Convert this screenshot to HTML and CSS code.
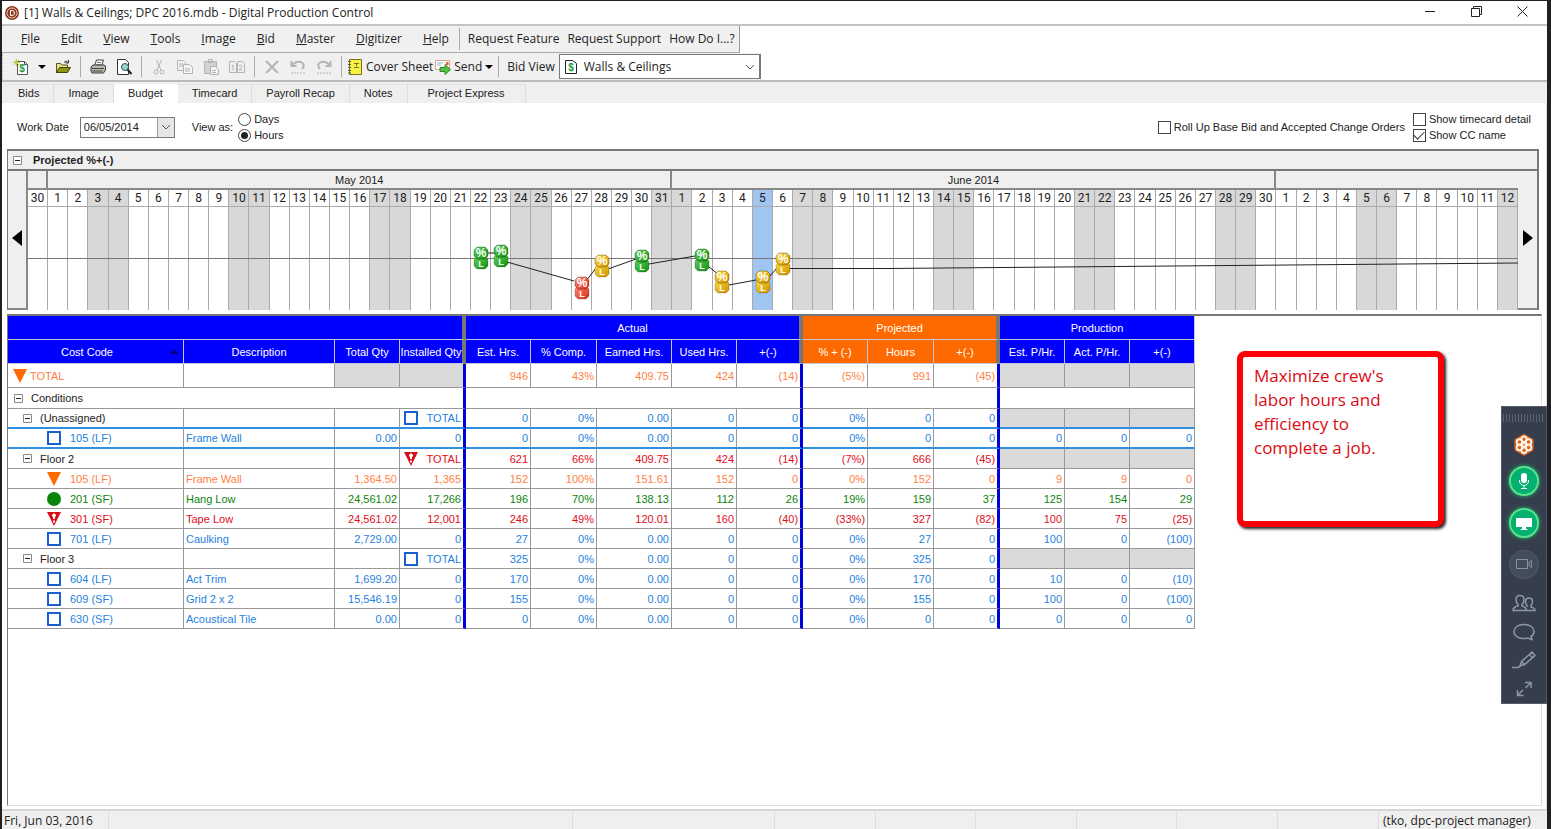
FILE: index.html
```html
<!DOCTYPE html>
<html lang="en">
<head>
<meta charset="utf-8">
<title>[1] Walls &amp; Ceilings; DPC 2016.mdb - Digital Production Control</title>
<link rel="stylesheet" href="styles.css">
</head>
<body>
<svg class="defs" aria-hidden="true">
  <defs>
    <linearGradient id="g-green" x1="0" x2="1" y1="0" y2="1"><stop offset="0" stop-color="#5fd35a"/><stop offset="1" stop-color="#0f8f12"/></linearGradient>
    <linearGradient id="g-yellow" x1="0" x2="1" y1="0" y2="1"><stop offset="0" stop-color="#ffdf3c"/><stop offset="1" stop-color="#cf8e00"/></linearGradient>
    <linearGradient id="g-red" x1="0" x2="1" y1="0" y2="1"><stop offset="0" stop-color="#ff8d78"/><stop offset="1" stop-color="#d92812"/></linearGradient>
    <symbol id="pill" viewBox="0 0 16 24">
      <path d="M4 10h8l3 3v7l-3 3H4l-3-3v-7z" stroke="#0003"/>
      <path d="M4 1h8l3 3v6l-3 3H4l-3-3V4z" stroke="#0004"/>
      <text x="8" y="11" class="pill-text percent">%</text>
      <text x="8" y="21" class="pill-text">L</text>
    </symbol>
    <symbol id="box" viewBox="0 0 14 14"><rect x="1" y="1" width="12" height="12" fill="#fff" stroke="#1660d0" stroke-width="2"/></symbol>
    <symbol id="down" viewBox="0 0 14 14"><path d="M0 0h14L7 14z" fill="#ff6a00"/></symbol>
    <symbol id="dot" viewBox="0 0 14 14"><circle cx="7" cy="7" r="7" fill="#0b840b"/></symbol>
    <symbol id="alert" viewBox="0 0 14 14"><path d="M0 0h14L7 14z" fill="#d80d18"/><path d="M7 1.500v5.500M5 3.500h4M7 8.500v2" stroke="#fff" stroke-width="2"/></symbol>
    <symbol id="minus" viewBox="0 0 9 9"><path d="M.5.5h8v8h-8z" fill="#fff" stroke="#8a8a8a"/><path d="M2 4.500h5" stroke="#222"/></symbol>
    <symbol id="chevron" viewBox="0 0 10 6"><path d="M1 1l4 4 4-4" fill="none" stroke="#555"/></symbol>
  </defs>
</svg>

<div class="window">
  <header class="titlebar">
    <svg class="app-icon" viewBox="0 0 14 14"><circle cx="7" cy="7" r="7" fill="#8a3a22"/><circle cx="7" cy="7" r="5" fill="none" stroke="#f0c8b4"/><path d="M5.500 4.500h1.500a2.500 2.500 0 0 1 0 5H5.500z" fill="none" stroke="#fff"/></svg>
    <h1>[1] Walls &amp; Ceilings; DPC 2016.mdb - Digital Production Control</h1>
    <div class="window-buttons">
      <button aria-label="Minimize"><svg viewBox="0 0 11 11"><path d="M0 5.500h10"/></svg></button>
      <button aria-label="Restore"><svg viewBox="0 0 11 11"><path d="M.5 2.500h8v8h-8zM2.500 2.500v-2h8v8h-2"/></svg></button>
      <button aria-label="Close"><svg viewBox="0 0 11 11"><path d="M.5.5l10 10M10.500.5l-10 10"/></svg></button>
    </div>
  </header>

  <nav class="menubar">
    <button><u>F</u>ile</button><button><u>E</u>dit</button><button><u>V</u>iew</button><button><u>T</u>ools</button><button><u>I</u>mage</button><button><u>B</u>id</button><button><u>M</u>aster</button><button><u>D</u>igitizer</button><button><u>H</u>elp</button>
    <div class="requests"><button>Request Feature</button><button>Request Support</button><button>How Do I...?</button></div>
  </nav>

  <div class="toolbar">
    <button class="tool" aria-label="New"><svg viewBox="0 0 16 16"><path d="M4.500 2.500h7l3 3v10h-10z" fill="#fff" stroke="#555"/><path d="M11.500 2.500v3h3" fill="none" stroke="#555"/><text x="9" y="13" class="dollar">$</text><path d="M3.500 0v7M0 3.500h7M1 1l5 5M6 1L1 6" stroke="#c3c744"/></svg></button>
    <button class="tool caret" aria-label="New options"><svg viewBox="0 0 8 4"><path d="M0 0h8L4 4z"/></svg></button>
    <button class="tool" aria-label="Open"><svg viewBox="0 0 16 16"><path d="M1.500 13.500v-9h4l1 1.500h6v3" fill="#e9e588" stroke="#55551a"/><path d="M1.500 13.500l3-5h11l-3 5z" fill="#8f9414" stroke="#3f430c"/><path d="M9 3.500q2-3 4 0M13.500 1v3h-3" fill="none" stroke="#333"/></svg></button>
    <i></i>
    <button class="tool" aria-label="Print"><svg viewBox="0 0 16 16"><path d="M4.500 7l2-6h7l-2 6z" fill="#fff" stroke="#444"/><path d="M7 3.500h4M6.500 5.500h4" stroke="#777"/><path d="M1 8l2-2h11l1.500 1v4l-2 3H2l-1-2z" fill="#b7b7b1" stroke="#3c3c3c"/><path d="M2 9.500h12M2.500 12h10" stroke="#444"/><path d="M9 10.500h2" stroke="#c7d631"/></svg></button>
    <button class="tool" aria-label="Print preview"><svg viewBox="0 0 16 16"><path d="M1.500.5h8l3 3v12h-11z" fill="#fff" stroke="#333"/><circle cx="9" cy="8" r="3.500" fill="#9fd0cf" stroke="#2c5657"/><path d="M11.500 10.500l4 4.500" stroke="#222" stroke-width="2"/></svg></button>
    <i></i>
    <button class="tool off" aria-label="Cut" disabled><svg viewBox="0 0 16 16"><path d="M5.500 1l4.500 10M10.500 1L6 11"/><circle cx="5" cy="13" r="2"/><circle cx="11" cy="13" r="2"/></svg></button>
    <button class="tool off" aria-label="Copy" disabled><svg viewBox="0 0 16 16"><path d="M.5 1.500h6l2 2v8h-8zM2 5h4M2 7h4"/><path d="M6.500 5.500h6l3 3v6h-9zM8 10h5M8 12h5" fill="#f4f4f4"/></svg></button>
    <button class="tool off" aria-label="Paste" disabled><svg viewBox="0 0 16 16"><path d="M1.500 2.500h12v12h-12z" fill="#d2d2d2"/><path d="M5.500.5h4v3h-4z"/><path d="M7.500 7.500h5l3 3v5h-8zM9 11.500h4M9 13.500h4" fill="#f4f4f4"/></svg></button>
    <button class="tool off" aria-label="Renumber" disabled><svg viewBox="0 0 16 16"><path d="M.5 2.500h5l2 2v9h-7zM8.500 2.500h5l2 2v9h-7zM2.500 7l1.500-1v5.500M10 7q2-2 3 0 0 1-3 4h3.500"/></svg></button>
    <i></i>
    <button class="tool off" aria-label="Delete" disabled><svg viewBox="0 0 16 16"><path d="M2 2l12 12M14 2L2 14" stroke-width="2"/></svg></button>
    <button class="tool off" aria-label="Undo" disabled><svg viewBox="0 0 16 16"><path d="M1.500 2v5h5M2 6.500q4-5 9-3.500 5 3 1 7" stroke-width="2"/><path d="M1 14h14" stroke-dasharray="2 1"/></svg></button>
    <button class="tool off" aria-label="Redo" disabled><svg viewBox="0 0 16 16"><path d="M14.500 2v5h-5M14 6.500q-4-5-9-3.500-5 3-1 7" stroke-width="2"/><path d="M1 14h14" stroke-dasharray="2 1"/></svg></button>
    <i></i>
    <button class="wide"><svg viewBox="0 0 16 16"><path d="M2.500.5h12v15h-12z" fill="#f9f142" stroke="#77731b"/><path d="M1 2.500h3M1 5.500h3M1 8.500h3M1 11.500h3M1 14h3" stroke="#555"/><path d="M7 4.500h5M9.500 4.500v3M7 8.500h5" stroke="#77731b"/></svg>Cover Sheet</button>
    <button class="wide"><svg viewBox="0 0 16 16"><path d="M.5 1.500h14v9H.5z" fill="#fff" stroke="#d9a98e"/><path d="M11 3h2.500v3H11z" fill="#e85a3a"/><path d="M2 4h6M2 6h4" stroke="#9ab7d9"/><path d="M5 8.500h5V5.500l5.500 5-5.500 5v-3H5z" fill="#55c044" stroke="#2f8a26"/></svg>Send<svg class="small" viewBox="0 0 8 4"><path d="M0 0h8L4 4z"/></svg></button>
    <i></i>
    <label for="bid-view">Bid View</label>
    <div class="combo view-combo">
      <svg class="doc" viewBox="0 0 14 16"><path d="M1.500 1.500h7l4 3v10h-11z" fill="#fff" stroke="#222"/><text x="7" y="12" class="dollar">$</text></svg>
      <select id="bid-view"><option>Walls &amp; Ceilings</option></select>
      <svg class="arrow"><use href="#chevron"/></svg>
    </div>
  </div>

  <div class="tabs" role="tablist">
    <button role="tab">Bids</button><button role="tab">Image</button><button role="tab" class="active" aria-selected="true">Budget</button><button role="tab">Timecard</button><button role="tab">Payroll Recap</button><button role="tab">Notes</button><button role="tab" class="roomy">Project Express</button>
  </div>

  <main>
    <form class="filters">
      <label for="work-date">Work Date</label>
      <div class="combo date-combo">
        <select id="work-date"><option>06/05/2014</option></select>
        <span class="arrow-box"><svg class="arrow"><use href="#chevron"/></svg></span>
      </div>
      <span>View as:</span>
      <div class="stack">
        <label><input type="radio" name="unit">Days</label>
        <label><input type="radio" name="unit" checked>Hours</label>
      </div>
      <label class="rollup"><input type="checkbox">Roll Up Base Bid and Accepted Change Orders</label>
      <div class="stack">
        <label><input type="checkbox">Show timecard detail</label>
        <label><input type="checkbox" checked>Show CC name</label>
      </div>
    </form>

    <section class="projection">
      <h2><svg><use href="#minus"/></svg>Projected %+(-)</h2>
      <div class="timeline">
        <button aria-label="Earlier"><svg viewBox="0 0 10 16"><path d="M10 0v16L0 8z"/></svg></button>
        <div class="calendar">
          <div class="months"><span></span><span>May 2014</span><span>June 2014</span><span></span></div>
          <div class="days">
            <span>30</span><span>1</span><span>2</span><span class="off">3</span><span class="off">4</span><span>5</span><span>6</span><span>7</span><span>8</span><span>9</span><span class="off">10</span><span class="off">11</span><span>12</span><span>13</span><span>14</span><span>15</span><span>16</span><span class="off">17</span><span class="off">18</span><span>19</span><span>20</span><span>21</span><span>22</span><span>23</span><span class="off">24</span><span class="off">25</span><span>26</span><span>27</span><span>28</span><span>29</span><span>30</span><span class="off">31</span>
            <span class="off">1</span><span>2</span><span>3</span><span>4</span><span class="today">5</span><span>6</span><span class="off">7</span><span class="off">8</span><span>9</span><span>10</span><span>11</span><span>12</span><span>13</span><span class="off">14</span><span class="off">15</span><span>16</span><span>17</span><span>18</span><span>19</span><span>20</span><span class="off">21</span><span class="off">22</span><span>23</span><span>24</span><span>25</span><span>26</span><span>27</span><span class="off">28</span><span class="off">29</span><span>30</span>
            <span>1</span><span>2</span><span>3</span><span>4</span><span class="off">5</span><span class="off">6</span><span>7</span><span>8</span><span>9</span><span>10</span><span>11</span><span class="off">12</span>
          </div>
          <div class="plot">
            <svg class="lines" viewBox="0 0 1490 104" preserveAspectRatio="none"><path d="M0 52.500H1490" stroke="#777"/><path d="M453 47H473M479 56L546 75M558 75L568 62M580 63L608 53M621 58L667 50M681 61L690 68M701 79L728 74M741 71L749 62M760 62.500H860L1490 57" stroke="#222"/></svg>
            <svg class="mark green" style="left:30.400%;top:50%"><use href="#pill"/></svg>
            <svg class="mark green" style="left:31.750%;top:48%"><use href="#pill"/></svg>
            <svg class="mark red" style="left:37.150%;top:79%"><use href="#pill"/></svg>
            <svg class="mark yellow" style="left:38.500%;top:58%"><use href="#pill"/></svg>
            <svg class="mark green" style="left:41.200%;top:53%"><use href="#pill"/></svg>
            <svg class="mark green" style="left:45.250%;top:52%"><use href="#pill"/></svg>
            <svg class="mark yellow" style="left:46.600%;top:73%"><use href="#pill"/></svg>
            <svg class="mark yellow" style="left:49.300%;top:73%"><use href="#pill"/></svg>
            <svg class="mark yellow" style="left:50.650%;top:56%"><use href="#pill"/></svg>
          </div>
        </div>
        <button aria-label="Later"><svg viewBox="0 0 10 16"><path d="M0 0v16l10-8z"/></svg></button>
      </div>
    </section>

    <section class="budget">
      <table>
        <colgroup><col class="w176"><col class="w151"><col class="w65"><col class="w66"><col class="w65"><col class="w66"><col class="w75"><col class="w65"><col class="w66"><col class="w65"><col class="w66"><col class="w66"><col class="w65"><col class="w65"><col class="w65"></colgroup>
        <thead>
          <tr><th colspan="4" class="edge"></th><th colspan="5" class="edge">Actual</th><th colspan="3" class="edge proj">Projected</th><th colspan="3">Production</th></tr>
          <tr><th><div class="sorted">Cost Code<svg viewBox="0 0 10 5"><path d="M0 5h10L5 0z"/></svg></div></th><th>Description</th><th>Total Qty</th><th class="edge">Installed Qty</th><th>Est. Hrs.</th><th>% Comp.</th><th>Earned Hrs.</th><th>Used Hrs.</th><th class="edge">+(-)</th><th class="proj">% + (-)</th><th class="proj">Hours</th><th class="edge proj">+(-)</th><th>Est. P/Hr.</th><th>Act. P/Hr.</th><th>+(-)</th></tr>
        </thead>
        <tbody>
          <tr class="orange grand"><td><div class="top"><svg><use href="#down"/></svg>TOTAL</div></td><td></td><td class="gray"></td><td class="gray edge"></td><td>946</td><td>43%</td><td>409.75</td><td>424</td><td class="edge">(14)</td><td>(5%)</td><td>991</td><td class="edge">(45)</td><td class="gray"></td><td class="gray"></td><td class="gray"></td></tr>
          <tr class="section"><td colspan="4" class="edge"><div class="root"><svg><use href="#minus"/></svg>Conditions</div></td><td colspan="5" class="edge"></td><td colspan="3" class="edge"></td><td colspan="3"></td></tr>
          <tr class="blue before"><td><div class="group"><svg><use href="#minus"/></svg>(Unassigned)</div></td><td></td><td></td><td class="edge"><div class="sum"><svg><use href="#box"/></svg>TOTAL</div></td><td>0</td><td>0%</td><td>0.00</td><td>0</td><td class="edge">0</td><td>0%</td><td>0</td><td class="edge">0</td><td class="gray"></td><td class="gray"></td><td class="gray"></td></tr>
          <tr class="blue selected"><td><div class="leaf"><svg><use href="#box"/></svg>105 (LF)</div></td><td>Frame Wall</td><td>0.00</td><td class="edge">0</td><td>0</td><td>0%</td><td>0.00</td><td>0</td><td class="edge">0</td><td>0%</td><td>0</td><td class="edge">0</td><td>0</td><td>0</td><td>0</td></tr>
          <tr class="red"><td><div class="group"><svg><use href="#minus"/></svg>Floor 2</div></td><td></td><td></td><td class="edge"><div class="sum"><svg><use href="#alert"/></svg>TOTAL</div></td><td>621</td><td>66%</td><td>409.75</td><td>424</td><td class="edge">(14)</td><td>(7%)</td><td>666</td><td class="edge">(45)</td><td class="gray"></td><td class="gray"></td><td class="gray"></td></tr>
          <tr class="orange"><td><div class="leaf"><svg><use href="#down"/></svg>105 (LF)</div></td><td>Frame Wall</td><td>1,364.50</td><td class="edge">1,365</td><td>152</td><td>100%</td><td>151.61</td><td>152</td><td class="edge">0</td><td>0%</td><td>152</td><td class="edge">0</td><td>9</td><td>9</td><td>0</td></tr>
          <tr class="green"><td><div class="leaf"><svg><use href="#dot"/></svg>201 (SF)</div></td><td>Hang Low</td><td>24,561.02</td><td class="edge">17,266</td><td>196</td><td>70%</td><td>138.13</td><td>112</td><td class="edge">26</td><td>19%</td><td>159</td><td class="edge">37</td><td>125</td><td>154</td><td>29</td></tr>
          <tr class="red"><td><div class="leaf"><svg><use href="#alert"/></svg>301 (SF)</div></td><td>Tape Low</td><td>24,561.02</td><td class="edge">12,001</td><td>246</td><td>49%</td><td>120.01</td><td>160</td><td class="edge">(40)</td><td>(33%)</td><td>327</td><td class="edge">(82)</td><td>100</td><td>75</td><td>(25)</td></tr>
          <tr class="blue"><td><div class="leaf"><svg><use href="#box"/></svg>701 (LF)</div></td><td>Caulking</td><td>2,729.00</td><td class="edge">0</td><td>27</td><td>0%</td><td>0.00</td><td>0</td><td class="edge">0</td><td>0%</td><td>27</td><td class="edge">0</td><td>100</td><td>0</td><td>(100)</td></tr>
          <tr class="blue"><td><div class="group"><svg><use href="#minus"/></svg>Floor 3</div></td><td></td><td></td><td class="edge"><div class="sum"><svg><use href="#box"/></svg>TOTAL</div></td><td>325</td><td>0%</td><td>0.00</td><td>0</td><td class="edge">0</td><td>0%</td><td>325</td><td class="edge">0</td><td class="gray"></td><td class="gray"></td><td class="gray"></td></tr>
          <tr class="blue"><td><div class="leaf"><svg><use href="#box"/></svg>604 (LF)</div></td><td>Act Trim</td><td>1,699.20</td><td class="edge">0</td><td>170</td><td>0%</td><td>0.00</td><td>0</td><td class="edge">0</td><td>0%</td><td>170</td><td class="edge">0</td><td>10</td><td>0</td><td>(10)</td></tr>
          <tr class="blue"><td><div class="leaf"><svg><use href="#box"/></svg>609 (SF)</div></td><td>Grid 2 x 2</td><td>15,546.19</td><td class="edge">0</td><td>155</td><td>0%</td><td>0.00</td><td>0</td><td class="edge">0</td><td>0%</td><td>155</td><td class="edge">0</td><td>100</td><td>0</td><td>(100)</td></tr>
          <tr class="blue"><td><div class="leaf"><svg><use href="#box"/></svg>630 (SF)</div></td><td>Acoustical Tile</td><td>0.00</td><td class="edge">0</td><td>0</td><td>0%</td><td>0.00</td><td>0</td><td class="edge">0</td><td>0%</td><td>0</td><td class="edge">0</td><td>0</td><td>0</td><td>0</td></tr>
        </tbody>
      </table>
    </section>
  </main>

  <footer class="statusbar"><span>Fri, Jun 03, 2016</span><span></span><span></span><span></span><span></span><span></span><span></span><span></span><span></span><span>(tko, dpc-project manager)</span></footer>
</div>

<aside class="callout">Maximize crew's labor hours and efficiency to complete a job.</aside>

<aside class="meeting">
  <div class="grip"></div>
  <svg class="logo" viewBox="0 0 24 24"><path d="M12 1l9.500 5.500v11L12 23l-9.500-5.500v-11z" fill="#d9641e" stroke="#d9641e" stroke-width="2" stroke-linejoin="round"/><g fill="#d9641e" stroke="#fff3e6" stroke-width="2"><circle cx="12" cy="6" r="3"/><circle cx="17" cy="9" r="3"/><circle cx="17" cy="15" r="3"/><circle cx="12" cy="18" r="3"/><circle cx="7" cy="15" r="3"/><circle cx="7" cy="9" r="3"/><circle cx="12" cy="12" r="2"/></g></svg>
  <button class="round on" aria-label="Microphone"><svg viewBox="0 0 18 18"><rect x="6" y="1" width="6" height="10" rx="3" fill="#fff"/><path d="M4.500 8v1a4.500 4.500 0 0 0 9 0V8M9 14v2.500M6 16.500h6" fill="none" stroke="#fff"/></svg></button>
  <button class="round on" aria-label="Screen"><svg viewBox="0 0 18 18"><path d="M1 4h16v9H1zM7 13h4v2H7zM5.500 15h7v1h-7z" fill="#fff"/></svg></button>
  <button class="round" aria-label="Camera"><svg viewBox="0 0 18 18"><path d="M1.500 4.500h11v9h-11zM16.500 5.500v7l-2.500-2v-3z" fill="none" stroke="#8993a2"/></svg></button>
  <button class="flat" aria-label="People"><svg viewBox="0 0 24 18"><path d="M1 16.500h13.500q0-3-4.500-4.500v-1.500q2-2 2-5 0-4-4-4t-4 4q0 3 2 5V12q-5 1-5 4.500zM15 16.500h8q0-2.500-4-3.500v-1.500q1.500-1.500 1.500-4 0-3.500-3.500-3.500t-3.500 3.500q0 2.500 1.500 4V13"/></svg></button>
  <button class="flat" aria-label="Chat"><svg viewBox="0 0 24 18"><path d="M12 1.500c6 0 10 3 10 7 0 2-1 4-3 5l1 3-4.500-1.500c-7 2-13.500-1.500-13.500-6.500 0-4 4-7 10-7z"/></svg></button>
  <button class="flat" aria-label="Draw"><svg viewBox="0 0 24 18"><path d="M0 16.500h5q2 0 3-1.500M8 15l1.500-4.500L20 1l3 3.500-10.500 9zM9.500 10.500l3 3M17.500 3.500l3 3.500"/></svg></button>
  <button class="flat" aria-label="Expand"><svg viewBox="0 0 24 18"><path d="M13 2.500h6V8M18.500 3l-5 5M5.500 10V15.500h6M6 15l5-5"/></svg></button>
</aside>
</body>
</html>
```

FILE: styles.css
```css
* { box-sizing: border-box; }

body {
  margin: 0;
  background: #202024;
  color: #222;
  font: 11px/14px "Liberation Sans", Arial, sans-serif;
}

button, select, input { font: inherit; color: inherit; margin: 0; }
button { border: 0; padding: 0; background: none; }
.defs { position: absolute; width: 0; height: 0; }

.window {
  min-height: 100vh;
  display: flex;
  flex-direction: column;
  margin: 0 4px 0 2px;
  border-top: 1px solid #202024;
  background: #fff;
}

/* title bar */
.titlebar {
  display: flex;
  align-items: center;
  gap: 5px;
  height: 25px;
  padding: 0 2px 0 3px;
  border-bottom: 2px solid #c4c4c4;
  font: 12px/16px "Open Sans", "Noto Sans", sans-serif;
}
.titlebar h1 { margin: 0; font-size: 12px; font-weight: 400; }
.app-icon { width: 14px; height: 14px; }
.window-buttons { display: flex; margin-left: auto; }
.window-buttons button { width: 46px; height: 20px; }
.window-buttons svg { width: 11px; height: 11px; fill: none; stroke: #222; }

/* menus and tools */
.menubar, .toolbar {
  display: flex;
  align-items: center;
  align-self: flex-start;
  height: 27px;
  background: #f0f0f0;
  font: 12px/16px "Open Sans", "Noto Sans", sans-serif;
  white-space: nowrap;
}
.menubar { padding-left: 8px; border-right: 1px solid #999; border-bottom: 1px solid #aaa; }
.menubar button { height: 22px; padding: 0 10px 0 11px; }
.requests { display: flex; border-left: 1px solid #aaa; padding: 0 0 0 4px; }
.requests button { padding: 0 4px; }
.toolbar { padding-left: 5px; border-left: 1px dotted #aaa; }
.tool { display: grid; place-items: center; width: 26px; height: 24px; }
.tool.caret { width: 16px; }
.tool svg, .wide svg { width: 16px; height: 16px; }
.tool.caret svg, .wide .small { width: 8px; height: 4px; }
.tool.off svg { fill: none; stroke: #b4b4b4; }
.toolbar i { width: 1px; height: 21px; margin: 0 4px; background: #aaa; }
.wide { display: flex; align-items: center; gap: 3px; height: 24px; padding: 0 1px; }
.toolbar label { padding: 0 4px; }
.dollar { font: bold 10px "Liberation Sans", sans-serif; fill: #199c38; text-anchor: middle; }

.combo { display: flex; align-items: center; border: 1px solid #7a7a7a; background: #fff; }
.combo select { flex: 1; appearance: none; border: 0; padding: 0; background: none; }
.combo .arrow { width: 10px; height: 6px; }
.view-combo { width: 202px; height: 25px; padding: 0 4px; border-right-width: 2px; }
.view-combo select { padding-left: 6px; }
.doc { width: 14px; height: 16px; }

/* tabs */
.tabs {
  display: flex;
  height: 23px;
  padding: 2px 0 0 2px;
  border-top: 2px solid #bbb;
  background: #efefef;
}
.tabs button { padding: 0 14px 2px; border-right: 1px solid #dcdcdc; border-top: 1px solid #e2e2e2; }
.tabs .active { background: #fff; border-color: #fff; }
.tabs .roomy { padding: 0 20px 2px; }

main {
  flex: 1;
  display: flex;
  flex-direction: column;
  padding: 0 7px 3px 5px;
  border-right: 1px solid #ddd;
}

/* filters */
.filters { display: flex; align-items: center; gap: 11px; height: 46px; padding: 2px 8px 0 10px; }
.date-combo { width: 95px; height: 21px; margin-right: 6px; padding-left: 3px; }
.arrow-box { display: grid; place-items: center; align-self: stretch; width: 17px; border-left: 1px solid #999; background: #e6e6e6; }
.stack { display: flex; flex-direction: column; gap: 2px; }
.filters > span { margin-right: -6px; }
.filters .stack label, .rollup { display: flex; align-items: center; gap: 3px; }
.rollup { margin-left: auto; }
.rollup + .stack { margin-left: -3px; }
.filters input { appearance: none; width: 13px; height: 13px; border: 1px solid #444; background: #fff; display: grid; place-items: center; }
.filters input[type="radio"] { border-radius: 50%; }
.filters input[type="radio"]:checked::before { content: ""; width: 7px; height: 7px; border-radius: 50%; background: #222; }
.filters input[type="checkbox"]:checked::before { content: ""; width: 9px; height: 5px; border: solid #333; border-width: 0 0 1px 1px; transform: rotate(-45deg); margin-bottom: 3px; }

/* projection timeline */
.projection { border: 2px solid #777; border-width: 2px 2px 0 1px; }
.projection h2 {
  display: flex;
  align-items: center;
  gap: 11px;
  height: 20px;
  margin: 0;
  padding-left: 5px;
  border-bottom: 2px solid #777;
  background: #efefef;
  font-size: 11px;
}
.projection h2 svg { width: 9px; height: 9px; }
.timeline { display: flex; height: 139px; }
.timeline > button { width: 20px; background: #efefef; border-bottom: 2px solid #888; border-right: 2px solid #888; }
.timeline > button:last-child { width: 19px; border-right: 0; }
.timeline > button svg { width: 10px; height: 16px; }
.calendar { flex: 1; min-width: 0; display: flex; flex-direction: column; position: relative; }
.months { display: grid; grid-template-columns: 1fr 31fr 30fr 12fr; height: 19px; border-bottom: 2px solid #888; background: #efefef; text-align: center; line-height: 18px; }
.months span { border-right: 2px solid #888; min-width: 0; }
.months span:last-child { border-right: 0; }
.days { flex: 1; display: grid; grid-template-columns: repeat(74, minmax(0, 1fr)); text-align: center; font: 12px/16px Roboto, "Liberation Sans", sans-serif; }
.days span { border-right: 1px solid #aaa; background: linear-gradient(#aaa, #aaa) 0 16px / 100% 1px no-repeat; }
.days .off { background-color: #d8d8d8; }
.days .today { background-color: #9fc5f0; }
.plot { position: absolute; left: 0; right: 0; top: 35px; bottom: 0; }
.lines { width: 100%; height: 100%; display: block; fill: none; }
.mark { position: absolute; width: 16px; height: 24px; transform: translate(-50%, -50%); }
.green.mark { fill: url(#g-green); }
.yellow.mark { fill: url(#g-yellow); }
.red.mark { fill: url(#g-red); }
.pill-text { font: bold 9px "Liberation Sans", sans-serif; fill: #fff; text-anchor: middle; }
.percent { font-size: 12px; }

/* budget table */
.budget { flex: 1; margin: 4px -3px 0 0; border: 1px solid #ddd; border-top: 2px solid #777; border-left-color: #777; }
table { table-layout: fixed; width: 1187px; border-spacing: 0; }
.w176 { width: 176px; } .w151 { width: 151px; } .w75 { width: 75px; } .w65 { width: 65px; } .w66 { width: 66px; }
th, td { padding: 0; border: solid #999; border-width: 0 1px 1px 0; white-space: nowrap; }
th { height: 24px; background: #0000ff; border-color: #c4c4d8; color: #fff; font-weight: 400; }
.proj { background: #ff6a00; }
th.edge { border-right: 4px solid #777; }
td { height: 20px; padding: 0 2px; line-height: 16px; text-align: right; }
td.edge { border-right: 3px solid #0000d8; }
td:nth-child(2):not(.edge) { text-align: left; }
td:first-child { text-align: left; color: #222; }
td div { display: flex; align-items: center; }
td svg { width: 14px; height: 14px; }
.sorted { display: flex; align-items: center; justify-content: flex-end; gap: 56px; padding-right: 4px; }
.sorted svg { width: 10px; height: 5px; fill: #000080; }
.gray { background: #dadada; }
.grand td { height: 24px; }
.section td { height: 21px; }
.top { gap: 3px; padding-left: 3px; }
.root, .group { gap: 8px; padding-left: 4px; }
.group { padding-left: 13px; }
.root svg, .group svg { width: 9px; height: 9px; }
.leaf { gap: 9px; padding-left: 37px; }
.sum { justify-content: flex-end; gap: 9px; }
.orange td, .orange td:first-child { color: #ff7f45; }
.blue td { color: #2482e0; }
.red td { color: #e00d1c; }
.green td, .green td:first-child { color: #0b840b; }
tr.blue td:first-child:has(.leaf) { color: #2482e0; }
tr.red td:first-child:has(.leaf) { color: #e00d1c; }
tr.blue td:first-child:has(.group), tr.red td:first-child:has(.group) { color: #222; }
.before td, .selected td { border-bottom: 2px solid #2f8fe0; }

/* status bar */
.statusbar {
  display: grid;
  grid-template-columns: 107px 464fr 201fr 101fr 100fr 101fr 100fr 101fr 101fr 168px;
  height: 20px;
  border-top: 2px solid #d5d5d5;
  background: #efefef;
  font: 12px/20px "Open Sans", "Noto Sans", sans-serif;
  white-space: nowrap;
}
.statusbar span { padding-left: 2px; border-right: 1px solid #ddd; }
.statusbar span:last-child { border: 0; padding-left: 4px; }

/* floating note */
.callout {
  position: absolute;
  left: 1237px;
  top: 351px;
  width: 207px;
  height: 176px;
  padding: 7px 40px 0 11px;
  border: 6px solid #fb0007;
  border-radius: 8px;
  background: #fff;
  box-shadow: 2px 2px 3px #222;
  color: #dd0a12;
  font: 17px/24px "Open Sans", "Noto Sans", sans-serif;
}

/* meeting panel */
.meeting {
  position: absolute;
  right: 4px;
  top: 406px;
  width: 46px;
  height: 298px;
  display: flex;
  flex-direction: column;
  align-items: center;
  padding-top: 7px;
  background: #363d4c;
  border: 1px solid #555c69;
}
.grip { width: 42px; height: 8px; background: repeating-linear-gradient(90deg, #5b6474 0 1px, transparent 1px 3px); }
.logo { width: 22px; height: 24px; margin: 11px 0 10px; }
.round { display: grid; place-items: center; width: 30px; height: 30px; margin-bottom: 10px; border: 1px solid #4e5766; border-radius: 50%; background: #434c5b; }
.round.on { margin-bottom: 12px; background: #04b070; border: 2px solid #5be08c; box-shadow: 0 0 4px #12c872; }
.round svg { width: 18px; height: 18px; }
.flat { display: grid; place-items: center; height: 29px; }
.flat svg { width: 24px; height: 18px; fill: none; stroke: #8c97a8; stroke-width: 1.500; }
```
